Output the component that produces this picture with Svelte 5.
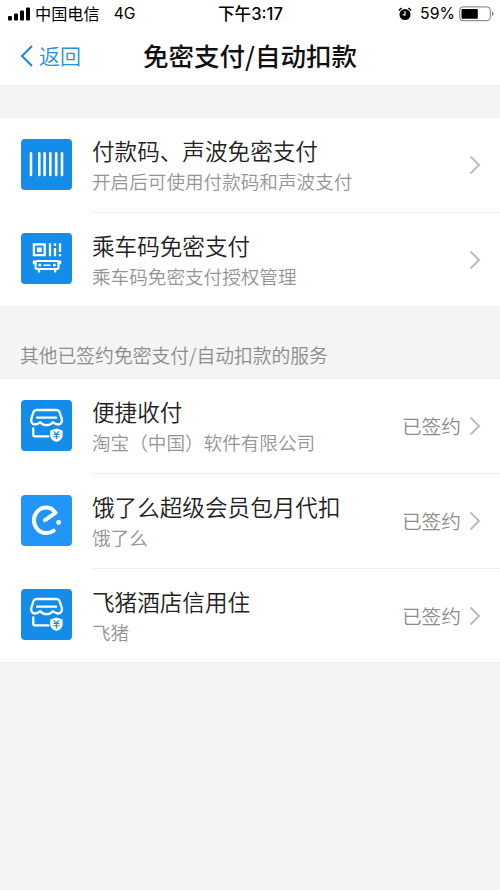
<script lang="ts">
  interface Service {
    icon: 'barcode' | 'transit' | 'shop' | 'eleme';
    title: string;
    desc: string;
    status?: string;
  }

  const codes: Service[] = [
    { icon: 'barcode', title: '付款码、声波免密支付', desc: '开启后可使用付款码和声波支付' },
    { icon: 'transit', title: '乘车码免密支付', desc: '乘车码免密支付授权管理' },
  ];

  const services: Service[] = [
    { icon: 'shop', title: '便捷收付', desc: '淘宝（中国）软件有限公司', status: '已签约' },
    { icon: 'eleme', title: '饿了么超级会员包月代扣', desc: '饿了么', status: '已签约' },
    { icon: 'shop', title: '飞猪酒店信用住', desc: '飞猪', status: '已签约' },
  ];
</script>

{#snippet row(item: Service)}
  <li class="row">
    <svg class="row-icon {item.icon}" viewBox="0 0 51 51" aria-hidden="true">
      {#if item.icon === 'barcode'}
        <path stroke-width="2.6" stroke-linecap="round" d="M10 14.3v21.6M18.3 14.3v21.6M23.6 14.3v21.6M29.3 14.3v21.6M35.2 14.3v21.6M41 14.3v21.6" />
      {:else if item.icon === 'transit'}
        <path stroke-width="2.3" d="M12.9 11.4h10.8v10.8H12.9zM29 10.3v13M34 10.3v2.6M34 15v8.3M39 10.3v8.8M39 20.9v2.4" />
        <path class="solid" d="M15.9 14.4h4.8v4.8h-4.8z" />
        <rect x="14.6" y="28" width="22.8" height="8" rx="1.6" stroke-width="2.2" />
        <path stroke-width="2.2" d="M14.5 28.5h-1.6v2.8M37.5 28.5h1.6v2.8M18 36.4v3M34.2 36.4v3" />
        <path stroke-width="1.6" d="M22.5 32.3h7" />
        <circle class="solid" cx="18.8" cy="32" r="1.5" />
        <circle class="solid" cx="33.3" cy="32" r="1.5" />
      {:else if item.icon === 'shop'}
        <g stroke-width="2.3" stroke-linecap="round" stroke-linejoin="round">
          <path d="M15.5 10h20c1.500 0 2.500.8 3 2l2.100 6.200c1 3.200-.3 6.300-3.400 6.300-2.500 0-4-1.100-5.400-2.300-1.400 1.700-3.300 3-6.200 3s-4.900-1.300-6.300-3c-1.400 1.200-2.900 2.300-5.400 2.300-3.100 0-4.400-3.100-3.400-6.300l2-6.200c.5-1.200 1.500-2 3-2zM16 17.700h19.200" />
          <path d="M12.3 28.5v6.3c0 1 .5 1.500 1.500 1.500h13.700" />
        </g>
        <path class="solid" d="M35.4 28.5l6.2 1.900v5c0 3.200-2.500 5.200-6.200 6.500-3.700-1.300-6.200-3.300-6.200-6.500v-5z" />
        <path class="yen" d="M32.8 31.3l2.6 3 2.6-3M32.4 34.5h6M32.4 36.7h6M35.4 34.3v4.9" />
      {:else}
        <path stroke-width="4" stroke-linecap="round" stroke-linejoin="round" d="M23.9 25.2L34.4 17.9C32.4 14.6 29.1 12.6 25.3 12.6C18.3 12.6 12.9 18.3 12.9 25.3S18.3 38 25.3 38C28.3 38 30.7 37.2 32.6 35.7" />
        <circle class="solid" cx="37.7" cy="27.5" r="2.4" />
      {/if}
    </svg>
    <div class="row-main">
      <div class="row-text">
        <div class="row-title">{item.title}</div>
        <div class="row-desc">{item.desc}</div>
      </div>
      {#if item.status}
        <span class="row-status">{item.status}</span>
      {/if}
      <svg class="row-arrow" viewBox="0 0 12 20" aria-hidden="true"><path d="M1.5 1.5L10 10l-8.5 8.5" /></svg>
    </div>
  </li>
{/snippet}

<div class="page">
  <header>
    <div class="status-bar">
      <div class="status-left">
        <svg class="signal" viewBox="0 0 23 14" aria-hidden="true">
          <rect x="0" y="9" width="4" height="4.5" rx="1" />
          <rect x="6" y="6.5" width="4" height="7" rx="1" />
          <rect x="12" y="3.5" width="4" height="10" rx="1" />
          <rect x="18" y="0.5" width="4" height="13" rx="1" />
        </svg>
        <span>中国电信</span>
        <span class="network">4G</span>
      </div>
      <span class="clock">下午3:17</span>
      <div class="status-right">
        <svg class="alarm" viewBox="0 0 14 14" aria-hidden="true">
          <circle cx="7" cy="7.5" r="5.5" />
          <path d="M.8 3.600L3.600 1M13.200 3.600L10.400 1" />
          <path class="hands" d="M7 4.300v3.500H4.800" />
        </svg>
        <span>59%</span>
        <svg class="battery" viewBox="0 0 36 16" aria-hidden="true">
          <rect class="shell" x="0.7" y="0.9" width="30.6" height="13.8" rx="3.2" />
          <rect x="2.5" y="3" width="16.3" height="9.7" rx="1" />
          <path d="M33 5.8c2 .7 2 3.500 0 4.200z" class="cap" />
        </svg>
      </div>
    </div>

    <nav>
      <button class="back">
        <svg viewBox="0 0 13 22" aria-hidden="true"><path d="M12 1L2 11l10 10" /></svg>
        <span>返回</span>
      </button>
      <h1>免密支付/自动扣款</h1>
    </nav>
  </header>

  <ul class="list">
    {#each codes as item (item.title)}
      {@render row(item)}
    {/each}
  </ul>

  <h2>其他已签约免密支付/自动扣款的服务</h2>

  <ul class="list">
    {#each services as item (item.title)}
      {@render row(item)}
    {/each}
  </ul>
</div>

<style>
  :global(body) {
    background: #f4f4f4;
  }

  .page {
    min-height: 890px;
    background: #f4f4f4;
    font-family: "Noto Sans CJK SC", sans-serif;
    font-weight: 350;
    color: #222;
  }

  header {
    height: 86px;
    margin-bottom: 31px;
    background: #fff;
    border-bottom: 1px solid #eee;
    box-sizing: border-box;
  }

  .status-bar {
    display: grid;
    grid-template-columns: 1fr auto 1fr;
    align-items: center;
    height: 28px;
    padding: 0 8px;
    font-family: Inter, "Noto Sans CJK SC", sans-serif;
    font-size: 16.2px;
    font-weight: 400;
    line-height: 28px;
    color: #000;
  }

  .status-left,
  .status-right {
    display: flex;
    align-items: center;
  }

  .status-right {
    justify-content: flex-end;
    margin-right: -3px;
    font-size: 15.8px;
  }

  .signal {
    width: 23px;
    height: 14px;
    margin-right: 4px;
  }

  .network {
    margin-left: 14px;
    font-size: 15.6px;
  }

  .clock {
    padding-left: 1px;
    font-weight: 500;
    font-size: 16.6px;
  }

  .alarm {
    width: 14px;
    height: 14px;
    margin-right: 8px;
  }

  .alarm path {
    fill: none;
    stroke: #000;
    stroke-width: 1.4;
  }

  .alarm .hands {
    stroke: #fff;
    stroke-width: 1.2;
  }

  .battery {
    width: 36px;
    height: 16px;
    margin-left: 4px;
  }

  .battery .shell {
    fill: none;
    stroke: #777;
    stroke-width: 1;
  }

  .battery .cap {
    fill: #777;
  }

  nav {
    display: grid;
    grid-template-columns: 1fr auto 1fr;
    align-items: center;
    height: 55px;
    padding: 0 20px;
  }

  .back {
    display: flex;
    align-items: center;
    gap: 6px;
    padding: 0;
    border: 0;
    background: none;
    font: inherit;
    font-size: 21px;
    line-height: 28px;
    color: #2b8fe0;
  }

  .back svg {
    width: 13px;
    height: 22px;
    fill: none;
    stroke: #1a86e0;
    stroke-width: 2;
  }

  .back span {
    margin-top: -2px;
  }

  h1 {
    margin: -2px 0 0;
    font-size: 25.5px;
    font-weight: 500;
    line-height: 34px;
    color: #111;
  }

  h2 {
    height: 71px;
    margin: 0;
    padding: 34px 20px 0;
    box-sizing: border-box;
    font-size: 18.8px;
    font-weight: 350;
    line-height: 28px;
    color: #8c8c8c;
  }

  .list {
    margin: 0;
    padding: 0;
    list-style: none;
    background: #fff;
    border-top: 1px solid #eee;
    border-bottom: 1px solid #eee;
  }

  .row {
    display: flex;
    align-items: center;
    height: 95px;
    padding-left: 21px;
  }

  .row:first-child {
    height: 94px;
  }

  .row:last-child {
    height: 94px;
  }

  .row-icon {
    flex-shrink: 0;
    width: 51px;
    height: 51px;
    margin: 0 20px 1px 0;
    border-radius: 4px;
    background: #138cea;
    fill: none;
    stroke: #fff;
  }

  .row-icon.eleme {
    background: #2196f8;
  }

  .row-icon .solid {
    fill: #fff;
    stroke: none;
  }

  .row-icon .yen {
    stroke: #138cea;
    stroke-width: 1.1;
  }

  .row-main {
    flex: 1;
    display: flex;
    align-items: center;
    height: 100%;
    padding-right: 19px;
    box-sizing: border-box;
  }

  .row + .row .row-main {
    border-top: 1px solid #eee;
  }

  .row-text {
    flex: 1;
  }

  .row-title {
    font-size: 22.6px;
    line-height: 32px;
  }

  .row-desc {
    font-size: 18.6px;
    line-height: 28px;
    color: #959595;
  }

  .row-status {
    margin-right: 8px;
    font-size: 19.7px;
    line-height: 28px;
    color: #8c8c8c;
  }

  .row-arrow {
    width: 12px;
    height: 20px;
    fill: none;
    stroke: #bdbdbd;
    stroke-width: 2;
  }
</style>
